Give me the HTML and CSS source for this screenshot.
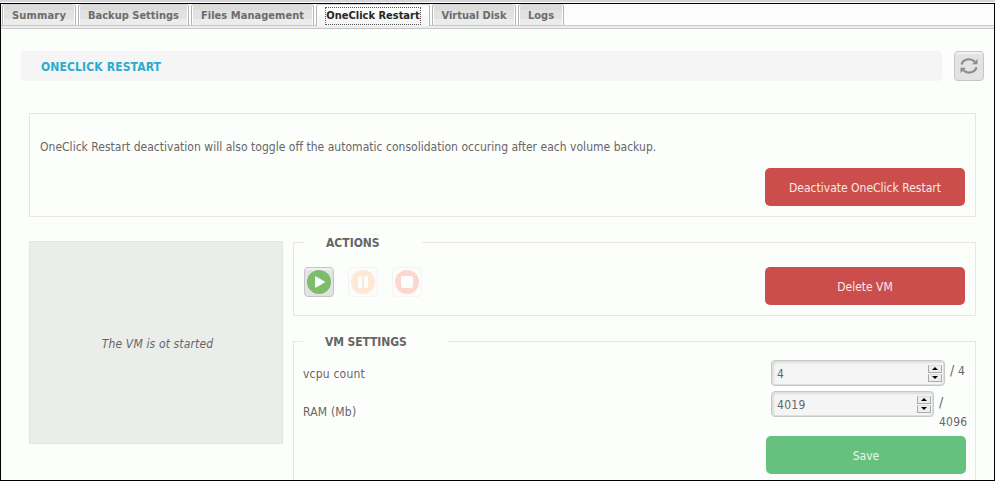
FILE: index.html
```html
<!DOCTYPE html>
<html lang="en">
<head>
<meta charset="utf-8">
<title>OneClick Restart</title>
<link rel="stylesheet" href="styles.css">
</head>
<body>
<div class="window">
  <nav class="tabs">
    <a class="tab tab-summary"><span>Summary</span></a>
    <a class="tab tab-backup"><span>Backup Settings</span></a>
    <a class="tab tab-files"><span>Files Management</span></a>
    <a class="tab tab-restart active"><span>OneClick Restart</span></a>
    <a class="tab tab-disk"><span>Virtual Disk</span></a>
    <a class="tab tab-logs"><span>Logs</span></a>
  </nav>
  <header class="heading">
    <h1><span>ONECLICK RESTART</span></h1>
    <button class="icon-button" aria-label="Refresh">
      <svg width="18" height="18" viewBox="0 0 18 18"><g fill="none" stroke="#8b8b8b" stroke-width="2.2"><path d="M1.5 7.6A7.6 6.8 0 0 1 14.6 4.6"/><path d="M16.5 10.2A7.6 6.8 0 0 1 3.4 13.2"/></g><path d="M17.5 2V7.3H12ZM.5 16V10.7H6Z" fill="#8b8b8b"/></svg>
    </button>
  </header>
  <section class="notice">
    <p><span class="notice-text">OneClick Restart deactivation will also toggle off the automatic consolidation occuring after each volume backup.</span></p>
    <button class="button danger"><span class="deactivate">Deactivate OneClick Restart</span></button>
  </section>
  <main class="columns">
    <aside class="screen"><em>The VM is ot started</em></aside>
    <div class="panels">
      <section class="panel actions">
        <h2>ACTIONS</h2>
        <div class="action-row">
          <button class="icon-button" aria-label="Start"><svg width="24" height="24" viewBox="0 0 24 24"><circle cx="12" cy="12" r="12" fill="#7bbd6b"/><path d="M8.6 6.7v10.6l9-5.3z" fill="#fcfefc" stroke="#fcfefc" stroke-linejoin="round"/></svg></button>
          <button class="icon-button disabled" aria-label="Pause"><svg width="24" height="24" viewBox="0 0 24 24"><circle cx="12" cy="12" r="12" fill="#fde9d5"/><rect x="7" y="6" width="4" height="12" rx="1.5" fill="#fcfefc"/><rect x="13" y="6" width="4" height="12" rx="1.5" fill="#fcfefc"/></svg></button>
          <button class="icon-button disabled" aria-label="Stop"><svg width="24" height="24" viewBox="0 0 24 24"><circle cx="12" cy="12" r="12" fill="#fcd7ce"/><rect x="6" y="6" width="12" height="12" rx="2" fill="#fcfefc"/></svg></button>
          <button class="button danger"><span>Delete VM</span></button>
        </div>
      </section>
      <section class="panel settings">
        <h2>VM SETTINGS</h2>
        <div class="setting cpu">
          <label>vcpu count</label>
          <div class="number"><span>4</span><i class="spinner"><b class="up"></b><b class="down"></b></i></div>
          <span class="limit"><i>/</i> 4</span>
        </div>
        <div class="setting ram">
          <label>RAM (Mb)</label>
          <div class="number"><span>4019</span><i class="spinner"><b class="up"></b><b class="down"></b></i></div>
          <span class="limit"><i>/</i> 4096</span>
        </div>
        <button class="button save"><span>Save</span></button>
      </section>
    </div>
  </main>
</div>
</body>
</html>
```
FILE: styles.css
```css
* { box-sizing: border-box; }
body {
  margin: 0;
  height: 481px;
  overflow: hidden;
  border-top: 2px solid #d5d3d9;
  padding-top: 1px;
  background: #fcfefc;
  color: #666;
  font-family: "DejaVu Sans Condensed", "DejaVu Sans", sans-serif;
  font-stretch: condensed;
  font-size: 12px;
}
h1, h2, p { margin: 0; }
span { white-space: nowrap; }
button { font: inherit; padding: 0; }
.window { height: 478px; border: 1px solid #000; overflow: hidden; }

.tabs {
  display: flex;
  height: 25px;
  padding-left: 1px;
  border-bottom: 1px solid #c8c8c8;
  background: linear-gradient(#fcfefc 21px, #c8c8c8 21px, #c8c8c8 22px, #ededed 22px);
}
.tab {
  height: 21px;
  display: flex;
  align-items: center;
  justify-content: center;
  padding-top: 1px;
  border: 1px solid #b4b4b4;
  border-top-color: #d5d5d5;
  border-bottom: 0;
  border-radius: 3px 3px 0 0;
  box-shadow: inset 1px 0 #fcfefc, inset -1px 0 #fcfefc;
  background: linear-gradient(#dadcda 0 5px, #e2e2e2 5px 14px, #ececec 14px);
  font-size: 11px;
  font-weight: bold;
  color: #6d6d6d;
}
.tab-summary { width: 74px; margin-right: 2px; letter-spacing: .2px; }
.tab-backup { width: 111px; margin-right: 2px; }
.tab-files { width: 123px; margin-right: 2px; letter-spacing: .05px; }
.tab-restart { width: 114px; margin-right: 2px; }
.tab-disk { width: 84px; margin-right: 2px; }
.tab-logs { width: 46px; }
.tab.active { height: 22px; background: linear-gradient(#fcfefc 10px, #f5f6f5 10px); color: #272727; padding-bottom: 0; }
.active span { outline: 1px dotted #555; line-height: 16px; }

.heading { display: flex; justify-content: space-between; margin: 22px 10px 0 20px; }
h1 {
  width: 921px;
  height: 30px;
  padding-left: 20px;
  border-radius: 4px;
  background: #f4f5f4;
  color: #2cabcf;
  font-size: 12px;
  line-height: 32px;
  letter-spacing: .14px;
}
.icon-button {
  width: 30px;
  height: 30px;
  display: flex;
  align-items: center;
  justify-content: center;
  border: 1px solid #c6c6c6;
  border-radius: 4px;
  background: #e3e3e3;
  box-shadow: inset 0 2px #f2f2f2;
}
.icon-button svg { flex: none; }
.icon-button.disabled { border-color: #f3f4f3; background: #fbfcfb; box-shadow: none; }

.notice {
  height: 104px;
  margin: 32px 18px 0 28px;
  padding: 24px 10px 10px;
  border: 1px solid #ebe6e5;
  display: flex;
  flex-direction: column;
  justify-content: space-between;
}
.notice p { line-height: 18px; letter-spacing: .02px; }
.button {
  width: 200px;
  height: 38px;
  border: 0;
  border-radius: 5px;
  color: #f7e9e7;
  align-self: flex-end;
  line-height: 40px;
}
.danger { background: #cb4e4c; }
.save { background: #66c17e; color: #e8f7eb; }

.columns { display: flex; gap: 10px; margin: 24px 18px 0 28px; }
.screen {
  flex: none;
  width: 254px;
  height: 203px;
  display: flex;
  align-items: center;
  justify-content: center;
  padding: 2px 0 0 3px;
  border: 1px solid #e3e5e3;
  background: #ebedeb;
  letter-spacing: .14px;
}
.panels { flex: 1; min-width: 0; }
.panel { border: 1px solid #ebe6e5; display: flex; flex-direction: column; }
.panel h2 {
  width: 118px;
  height: 18px;
  margin: -10px 0 0 10px;
  padding-left: 22px;
  background: #fcfefc;
  font-size: 12px;
  line-height: 20px;
}
.actions { margin-top: 1px; height: 74px; }
.action-row { display: flex; gap: 14px; margin: 16px 10px 0; }
.action-row .button { margin-left: auto; }
.settings { margin-top: 25px; height: 160px; }
.settings h2 { width: 145px; margin-left: 9px; letter-spacing: -.1px; }
.setting { display: flex; align-items: flex-start; padding-left: 9px; }
.setting label { flex: none; width: 468px; line-height: 18px; letter-spacing: .2px; }
.cpu { height: 31px; margin-top: 10px; }
.cpu label { padding-top: 5px; }
.ram { height: 45px; }
.ram label { padding-top: 12px; }
.number {
  flex: none;
  width: 174px;
  height: 26px;
  display: flex;
  align-items: center;
  justify-content: space-between;
  padding: 0 2px 0 5px;
  border: 1px solid #c7c9c7;
  border-radius: 4px;
  background: #f4f5f4;
  box-shadow: inset 2px 2px 2px #dddfdd, inset -1px -1px #dddfdd;
  letter-spacing: .3px;
}
.number span { padding-top: 2px; }
.ram .number { width: 163px; }
.spinner { width: 14px; height: 17px; display: grid; grid-template-rows: 8px 8px; gap: 1px; }
.spinner b { background: #eee; border: 1px solid #aaa; border-top-color: #ddd; display: grid; place-items: center; }
.spinner b::after { content: ""; border: 3px solid transparent; border-top-width: 0; border-bottom: 3px solid #000; }
.spinner .down::after { transform: rotate(180deg); }
.limit { flex: none; width: 30px; margin-left: 5px; padding-top: 2px; line-height: 19px; white-space: normal; letter-spacing: .2px; }
.cpu .limit { padding-top: 1px; }
.limit i { font-style: normal; font-size: 14px; }
.settings .save { margin-right: 9px; }
```
